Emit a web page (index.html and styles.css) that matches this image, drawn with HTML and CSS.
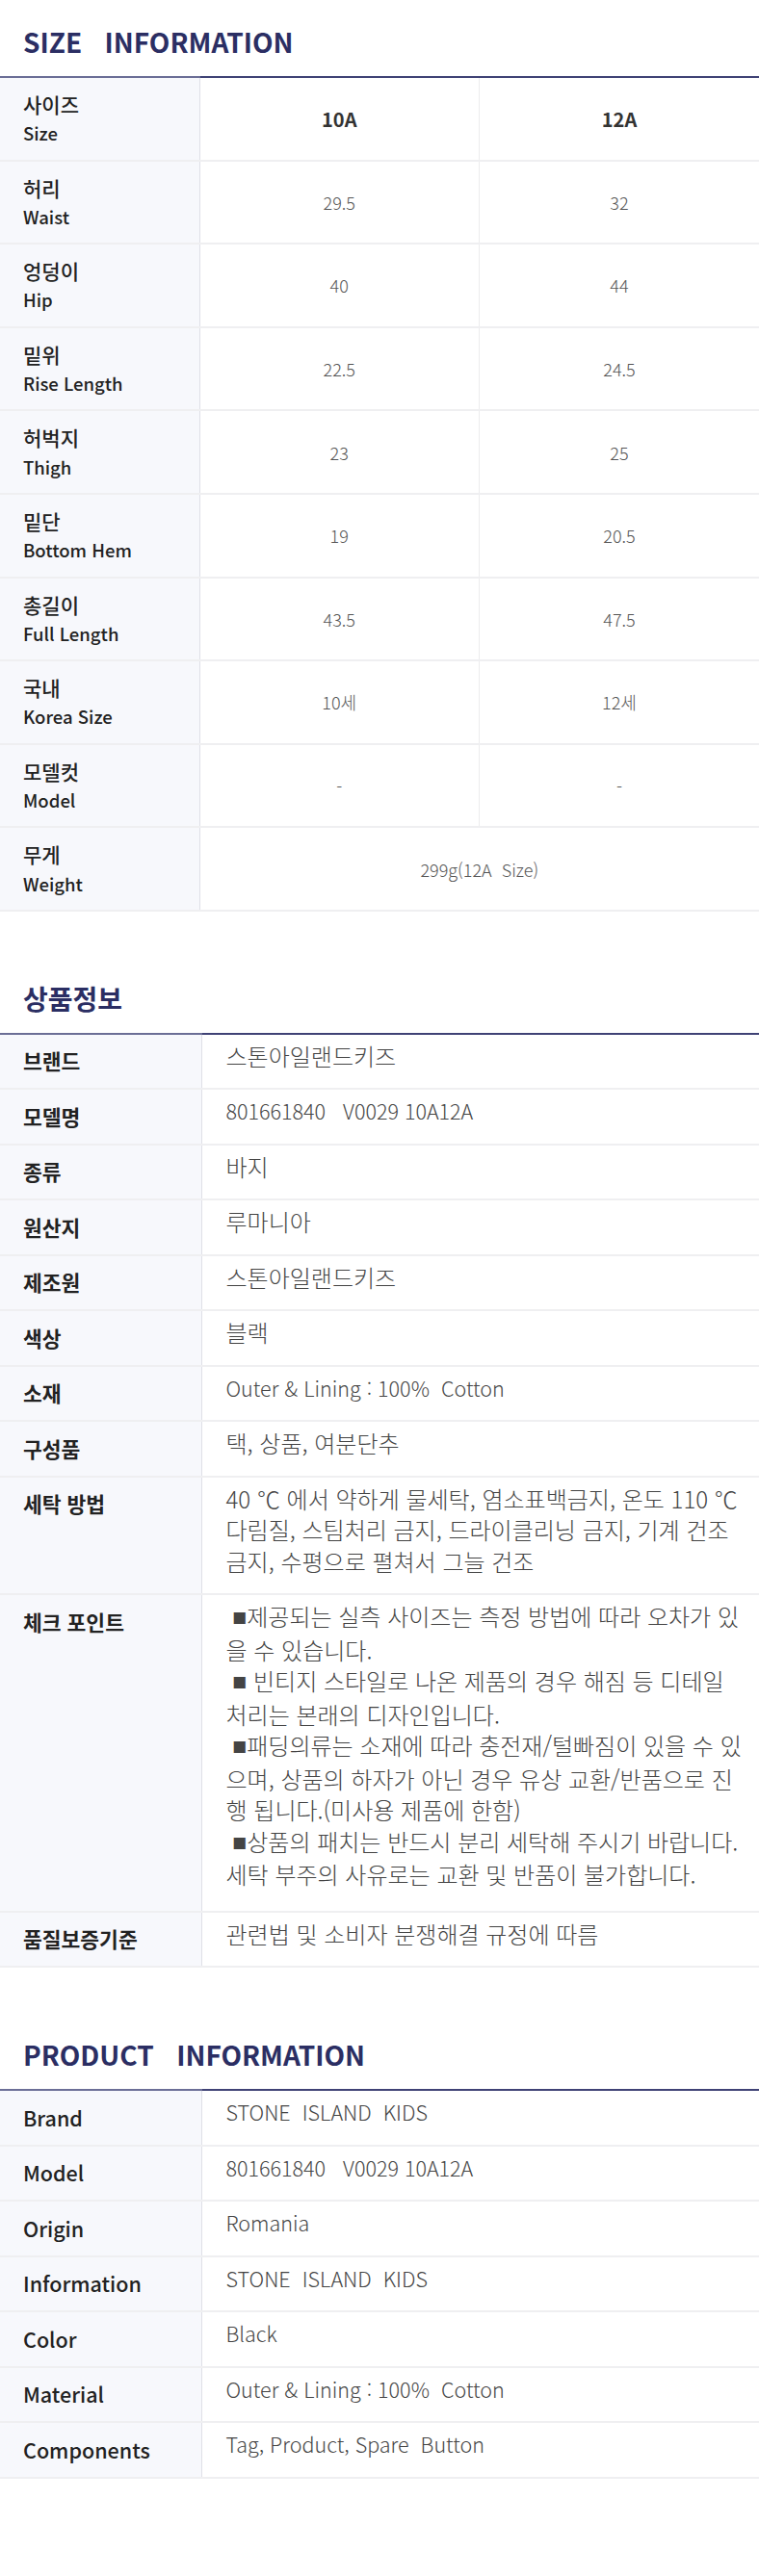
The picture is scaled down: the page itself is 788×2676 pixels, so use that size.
FILE: index.html
```html
<!DOCTYPE html>
<html lang="ko">
<head>
    <meta charset="UTF-8">
    <meta name="viewport" content="width=device-width, initial-scale=1.0">
    <title>SIZE INFORMATION</title>
    <link rel="stylesheet" href="styles.css">
</head>
<body>
    <div class="wrap">

        <!-- 사이즈 정보 -->
        <section class="block">
            <h2 class="block-title">SIZE&nbsp;&nbsp;&nbsp;INFORMATION</h2>
            <table class="size-table">
                <colgroup>
                    <col class="col-label">
                    <col>
                    <col>
                </colgroup>
                <tr>
                    <th>사이즈<span class="en">Size</span></th>
                    <td class="size-head">10A</td>
                    <td class="size-head">12A</td>
                </tr>
                <tr>
                    <th>허리<span class="en">Waist</span></th>
                    <td>29.5</td>
                    <td>32</td>
                </tr>
                <tr>
                    <th>엉덩이<span class="en">Hip</span></th>
                    <td>40</td>
                    <td>44</td>
                </tr>
                <tr>
                    <th>밑위<span class="en">Rise Length</span></th>
                    <td>22.5</td>
                    <td>24.5</td>
                </tr>
                <tr>
                    <th>허벅지<span class="en">Thigh</span></th>
                    <td>23</td>
                    <td>25</td>
                </tr>
                <tr>
                    <th>밑단<span class="en">Bottom Hem</span></th>
                    <td>19</td>
                    <td>20.5</td>
                </tr>
                <tr>
                    <th>총길이<span class="en">Full Length</span></th>
                    <td>43.5</td>
                    <td>47.5</td>
                </tr>
                <tr>
                    <th>국내<span class="en">Korea Size</span></th>
                    <td>10세</td>
                    <td>12세</td>
                </tr>
                <tr>
                    <th>모델컷<span class="en">Model</span></th>
                    <td>-</td>
                    <td>-</td>
                </tr>
                <tr>
                    <th>무게<span class="en">Weight</span></th>
                    <td colspan="2">299g(12A&nbsp;&nbsp;Size)</td>
                </tr>
            </table>
        </section>

        <!-- 상품정보 -->
        <section class="block">
            <h2 class="block-title">상품정보</h2>
            <table class="info-table">
                <colgroup>
                    <col class="col-label">
                    <col>
                </colgroup>
                <tr><th>브랜드</th><td>스톤아일랜드키즈</td></tr>
                <tr><th>모델명</th><td class="latin">801661840&nbsp;&nbsp;&nbsp;V0029 10A12A</td></tr>
                <tr><th>종류</th><td>바지</td></tr>
                <tr><th>원산지</th><td>루마니아</td></tr>
                <tr><th>제조원</th><td>스톤아일랜드키즈</td></tr>
                <tr><th>색상</th><td>블랙</td></tr>
                <tr><th>소재</th><td class="latin">Outer &amp; Lining : 100%&nbsp;&nbsp;Cotton</td></tr>
                <tr><th>구성품</th><td>택, 상품, 여분단추</td></tr>
                <tr>
                    <th>세탁 방법</th>
                    <td>40 ℃ 에서 약하게 물세탁, 염소표백금지, 온도 110 ℃<br>
                        다림질, 스팀처리 금지, 드라이클리닝 금지, 기계 건조<br>
                        금지, 수평으로 펼쳐서 그늘 건조</td>
                </tr>
                <tr>
                    <th>체크 포인트</th>
                    <td class="check">&nbsp;<span class="bullet">■</span>제공되는 실측 사이즈는 측정 방법에 따라 오차가 있<br>
                        을 수 있습니다.<br>
                        &nbsp;<span class="bullet">■</span> 빈티지 스타일로 나온 제품의 경우 해짐 등 디테일<br>
                        처리는 본래의 디자인입니다.<br>
                        &nbsp;<span class="bullet">■</span>패딩의류는 소재에 따라 충전재/털빠짐이 있을 수 있<br>
                        으며, 상품의 하자가 아닌 경우 유상 교환/반품으로 진<br>
                        행 됩니다.(미사용 제품에 한함)<br>
                        &nbsp;<span class="bullet">■</span>상품의 패치는 반드시 분리 세탁해 주시기 바랍니다.<br>
                        세탁 부주의 사유로는 교환 및 반품이 불가합니다.</td>
                </tr>
                <tr><th>품질보증기준</th><td>관련법 및 소비자 분쟁해결 규정에 따름</td></tr>
            </table>
        </section>

        <!-- PRODUCT INFORMATION -->
        <section class="block">
            <h2 class="block-title">PRODUCT&nbsp;&nbsp;&nbsp;INFORMATION</h2>
            <table class="info-table info-en">
                <colgroup>
                    <col class="col-label">
                    <col>
                </colgroup>
                <tr><th>Brand</th><td>STONE&nbsp;&nbsp;ISLAND&nbsp;&nbsp;KIDS</td></tr>
                <tr><th>Model</th><td>801661840&nbsp;&nbsp;&nbsp;V0029 10A12A</td></tr>
                <tr><th>Origin</th><td>Romania</td></tr>
                <tr><th>Information</th><td>STONE&nbsp;&nbsp;ISLAND&nbsp;&nbsp;KIDS</td></tr>
                <tr><th>Color</th><td>Black</td></tr>
                <tr><th>Material</th><td>Outer &amp; Lining : 100%&nbsp;&nbsp;Cotton</td></tr>
                <tr><th>Components</th><td>Tag, Product, Spare&nbsp;&nbsp;Button</td></tr>
            </table>
        </section>

    </div>
</body>
</html>
```

FILE: styles.css
```css
/* 기본 */
body {
    margin: 0;
    background: #fff;
    font-family: "Noto Sans CJK KR", "Noto Sans", sans-serif;
    color: #222;
}

.wrap {
    padding-top: 23px;
}

.block {
    margin-bottom: 70px;
}

.block-title {
    margin: 0 0 16px;
    padding-left: 24px;
    font-size: 28px;
    line-height: 40px;
    font-weight: 700;
    color: #2b2e63;
}

/* 표 공통 */
table {
    width: 100%;
    border-collapse: collapse;
    table-layout: fixed;
    border-top: 2px solid #3f4275;
}

table tr:first-child th {
    border-top: 2px solid #6b6e96; /* 라벨 칸 위 선은 조금 밝게 */
}

th {
    text-align: left;
    vertical-align: top;
    background: #f7f8fc;
    border-right: 1px solid #dfe0e7;
    border-bottom: 2px solid #efeff1;
    color: #222;
}

td {
    border-bottom: 2px solid #efeff1;
}

/* 사이즈 표 */
.size-table .col-label {
    width: 207px;
}

.size-table th {
    padding: 12px 24px;
    font-size: 21px;
    line-height: 30.3px;
    font-weight: 500;
}

.size-table th .en {
    display: block;
    font-size: 18.5px;
}

.size-table td {
    padding: 12px 10px;
    text-align: center;
    vertical-align: middle;
    border-left: 1px solid #ececee;
    font-size: 18px;
    font-weight: 300;
    color: #555;
}

.size-table td.size-head {
    font-size: 20px;
    font-weight: 700;
    color: #333;
}

/* 상품 정보 표 */
.info-table .col-label {
    width: 209px;
}

.info-table th {
    padding: 11.5px 24px 11px;
    font-size: 21.5px;
    line-height: 32.5px;
    font-weight: 700;
}

.info-en th {
    font-weight: 500;
}

.info-table td {
    padding: 6px 8px 17px 25px;
    font-size: 24px;
    line-height: 32.5px;
    font-weight: 300;
    color: #444;
}

/* 영문 값은 한글보다 좁게 */
.info-table td.latin,
.info-en td {
    font-size: 21.5px;
}

.info-table td.check {
    padding-bottom: 21px;
}

.check .bullet {
    font-size: 15px;
    vertical-align: 2px;
}
```
